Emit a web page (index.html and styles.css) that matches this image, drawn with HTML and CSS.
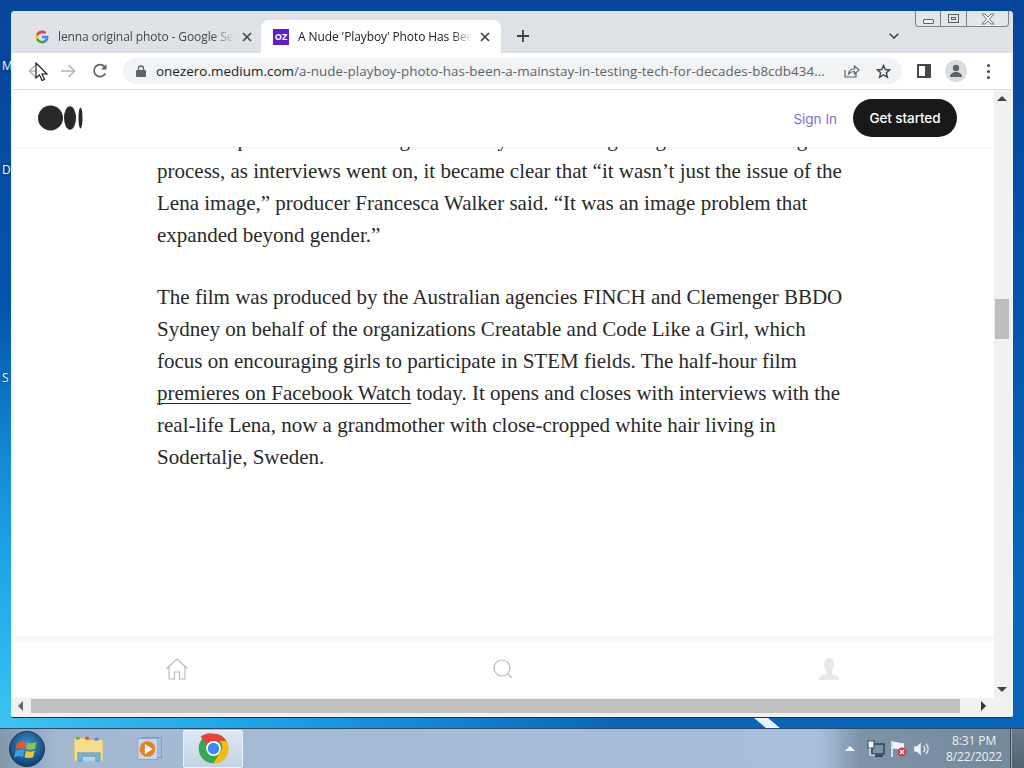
FILE: index.html
```html
<!DOCTYPE html>
<html lang="en">
<head>
<meta charset="utf-8">
<title>A Nude 'Playboy' Photo Has Been a Mainstay</title>
<link rel="stylesheet" href="styles.css">
</head>
<body>
<div class="screen">
  <main class="desktop">
    <span class="desk-label label-m">M</span>
    <span class="desk-label label-d">D</span>
    <span class="desk-label label-s">S</span>
    <span class="streak"></span>
    <section class="window">
      <div class="window-controls">
        <span class="wc wc-min"><i class="min-glyph"></i></span>
        <span class="wc wc-max"><i class="max-glyph"></i></span>
        <span class="wc wc-close"><svg width="16" height="12" viewBox="0 0 16 12"><path d="M2 1h3l3 3 3-3h3l-4.500 5 4.500 5h-3l-3-3-3 3h-3l4.500-5z" fill="#eef0f3" stroke="#6f7780" stroke-width="1"/></svg></span>
      </div>
      <div class="tabstrip">
        <div class="tab">
          <svg class="favicon" width="14" height="14" viewBox="0 0 48 48"><path fill="#4285f4" d="M46 24.500c0-1.600-.1-3.100-.4-4.500H24v8.600h12.400c-.5 2.800-2.100 5.200-4.500 6.800v5.600h7.200C43.400 37 46 31.300 46 24.500z"/><path fill="#34a853" d="M24 46c6 0 11.100-2 14.800-5.400l-7.200-5.600c-2 1.400-4.600 2.200-7.600 2.200-5.800 0-10.700-3.900-12.500-9.200H4.100v5.800C7.800 41.100 15.300 46 24 46z"/><path fill="#fbbc05" d="M11.500 28c-.9-2.600-.9-5.400 0-8v-5.800H4.100a22 22 0 0 0 0 19.600z"/><path fill="#ea4335" d="M24 10.800c3.300 0 6.200 1.100 8.500 3.300l6.400-6.400C35.100 4.100 30 2 24 2 15.300 2 7.800 6.900 4.100 14.200l7.400 5.800c1.800-5.300 6.700-9.200 12.500-9.200z"/></svg>
          <span class="tab-title">lenna original photo - Google Se</span>
          <svg class="tab-x" width="10" height="10" viewBox="0 0 10 10"><path d="M1 1l8 8M9 1L1 9" stroke="#45494e" stroke-width="1.700"/></svg>
        </div>
        <div class="tab tab-active">
          <span class="oz">OZ</span>
          <span class="tab-title">A Nude 'Playboy' Photo Has Bee</span>
          <svg class="tab-x" width="10" height="10" viewBox="0 0 10 10"><path d="M1 1l8 8M9 1L1 9" stroke="#3c4043" stroke-width="1.700"/></svg>
        </div>
        <svg class="newtab" width="12" height="12" viewBox="0 0 12 12"><path d="M6 0v12M0 6h12" stroke="#3c4043" stroke-width="1.800"/></svg>
        <svg class="tabs-menu" width="10" height="6" viewBox="0 0 10 6"><path d="M.7.7L5 5l4.300-4.300" fill="none" stroke="#3c4043" stroke-width="1.500"/></svg>
      </div>
      <div class="toolbar">
        <svg class="tool tool-back" width="16" height="14" viewBox="0 0 16 14"><path d="M15 7H2M7.500 1L1.500 7l6 6" fill="none" stroke="#b4b7bb" stroke-width="1.700"/></svg>
        <svg class="tool tool-fwd" width="16" height="14" viewBox="0 0 16 14"><path d="M1 7h13M8.500 1l6 6-6 6" fill="none" stroke="#b4b7bb" stroke-width="1.700"/></svg>
        <svg class="tool tool-reload" width="16" height="16" viewBox="0 0 16 16"><path d="M13.300 10.500A6 6 0 1 1 12.500 3.600" fill="none" stroke="#5f6368" stroke-width="1.700"/><path d="M14.500 1v5.500H9z" fill="#5f6368"/></svg>
        <div class="omnibox">
          <svg class="lock" width="10" height="12" viewBox="0 0 10 12"><path d="M2.500 5V3.500a2.500 2.500 0 0 1 5 0V5" fill="none" stroke="#5f6368" stroke-width="1.300"/><rect y="5" width="10" height="7" rx="1" fill="#5f6368"/></svg>
          <span class="url"><b>onezero.medium.com</b>/a-nude-playboy-photo-has-been-a-mainstay-in-testing-tech-for-decades-b8cdb434...</span>
          <svg class="share" width="16" height="14" viewBox="0 0 16 14"><path d="M1 6v7h11V9" fill="none" stroke="#5f6368" stroke-width="1.200"/><path d="M4.500 10c.5-3.500 3-5 6-5V2l4.500 4-4.500 4V7.500c-2.500 0-4.500.7-6 2.500z" fill="none" stroke="#5f6368" stroke-width="1.200"/></svg>
          <svg class="star" width="15" height="15" viewBox="0 0 15 15"><path d="M7.500 1.500l1.800 4 4.400.4-3.300 2.900 1 4.300-3.900-2.300-3.900 2.300 1-4.300L1.300 5.900l4.400-.4z" fill="none" stroke="#45494e" stroke-width="1.500"/></svg>
        </div>
        <svg class="tool-panel" width="14" height="14" viewBox="0 0 14 14"><rect x="1" y="1" width="12" height="12" fill="none" stroke="#45494e" stroke-width="2"/><rect x="8" y="1" width="5" height="12" fill="#45494e"/></svg>
        <span class="avatar"><svg width="14" height="14" viewBox="0 0 14 14"><circle cx="7" cy="4" r="3.200" fill="#5f6368"/><path d="M1 13c0-3.500 3-5 6-5s6 1.500 6 5z" fill="#5f6368"/></svg></span>
        <span class="kebab"><i></i><i></i><i></i></span>
      </div>
      <div class="page">
        <div class="viewport">
          <div class="content">
            <header class="site-header">
              <svg class="m-logo" width="45" height="26" viewBox="0 0 45 26"><circle cx="12.500" cy="13" r="12.500" fill="#292929"/><ellipse cx="32" cy="13" rx="6" ry="11.700" fill="#292929"/><ellipse cx="42.500" cy="13" rx="2" ry="10.500" fill="#292929"/></svg>
              <a class="signin">Sign In</a>
              <a class="get-started">Get started</a>
            </header>
            <article class="article">
              <p class="clipped">Once the production team began the story and then it got big and all the thing</p>
              <p class="para">process, as interviews went on, it became clear that “it wasn’t just the issue of the<br>Lena image,” producer Francesca Walker said. “It was an image problem that<br>expanded beyond gender.”</p>
              <p class="para">The film was produced by the Australian agencies FINCH and Clemenger BBDO<br>Sydney on behalf of the organizations Creatable and Code Like a Girl, which<br>focus on encouraging girls to participate in STEM fields. The half-hour film<br><a class="link">premieres on Facebook Watch</a> today. It opens and closes with interviews with the<br>real-life Lena, now a grandmother with close-cropped white hair living in<br>Sodertalje, Sweden.</p>
            </article>
            <nav class="bottom-nav">
              <svg width="24" height="22" viewBox="0 0 24 22"><path d="M1.500 10.500L12 1l10.500 9.500M4 8.500V21h5.500v-7h5v7H20V8.500" fill="none" stroke="#b9b9b9" stroke-width="1.100"/></svg>
              <svg width="22" height="22" viewBox="0 0 22 22"><circle cx="10" cy="10" r="8" fill="none" stroke="#b9b9b9" stroke-width="1.200"/><path d="M16 16l4 4" stroke="#b9b9b9" stroke-width="1.200"/></svg>
              <svg width="22" height="24" viewBox="0 0 22 24"><ellipse cx="11" cy="8" rx="5" ry="7" fill="#e8e8e8"/><path d="M1 23c0-4 4-6 10-6s10 2 10 6z" fill="#e8e8e8"/><rect x="8" y="13" width="6" height="6" fill="#e8e8e8"/></svg>
            </nav>
          </div>
          <div class="vscroll">
            <i class="arrow-up"></i>
            <span class="vthumb"></span>
            <i class="arrow-down"></i>
          </div>
        </div>
        <div class="hscroll">
          <i class="arrow-left"></i>
          <span class="hthumb"></span>
          <i class="arrow-right"></i>
        </div>
      </div>
    </section>
    <svg class="cursor" width="14" height="20" viewBox="0 0 14 20"><path d="M1 1v15l3.500-3.200L7 18.500l2.500-1-2.500-5.500h5z" fill="#fff" stroke="#111" stroke-width="1.100"/></svg>
  </main>
  <footer class="taskbar">
    <svg class="orb" width="38" height="38" viewBox="0 0 38 38">
      <defs><radialGradient id="orbg" cx="50%" cy="40%" r="60%"><stop offset="0" stop-color="#3f9ad6"/><stop offset="1" stop-color="#0c3f6f"/></radialGradient></defs>
      <circle cx="19" cy="19" r="17.500" fill="url(#orbg)" stroke="#1b3a55"/>
      <path d="M9 13c3-2 6-2 9-1l-1.500 7c-3-1-6-1-9 .5z" fill="#e8562a"/>
      <path d="M19.500 12.500c3 1 6 1 9-.5l-1.500 7c-3 1-6 1-9-.5z" fill="#8fc243"/>
      <path d="M7.500 21c3-1.500 6-1.500 8.700-.5L15 27c-3-1-6-1-9 .5z" fill="#3aa0e0"/>
      <path d="M18 21c3 1 6 1 8.700-.5l-1.400 6.500c-3 1.300-6 1.300-8.800.3z" fill="#f4c232"/>
    </svg>
    <svg class="task-icon folder" width="32" height="28" viewBox="0 0 34 30">
      <path d="M1 3h12l2 2h17v23H1z" fill="#f5dd8c" stroke="#c9b26a" stroke-width=".8"/>
      <rect x="3" y="2" width="4" height="3" fill="#67b34a"/><rect x="13" y="2" width="4" height="3" fill="#d8513a"/><rect x="23" y="3" width="4" height="3" fill="#4a8fd0"/>
      <path d="M5 19h24v9h-5v-5H10v5H5z" fill="#6eb3dc" stroke="#4b8fc0" stroke-width=".6"/>
      <rect x="11" y="24" width="12" height="4" fill="#a9d4ee"/>
    </svg>
    <svg class="task-icon media" width="26" height="26" viewBox="0 0 30 28">
      <rect x="6" y="1" width="22" height="23" fill="#9fc2e0" stroke="#6f95b8"/>
      <rect x="1" y="2" width="23" height="24" fill="#c5d8ea" stroke="#7fa3c4"/>
      <circle cx="12" cy="14" r="9" fill="#e8801f"/>
      <path d="M9 8l9 6-9 6z" fill="#fff"/>
    </svg>
    <div class="task-active">
      <svg width="31" height="31" viewBox="0 0 48 48">
        <circle cx="24" cy="24" r="23" fill="#34a853"/>
        <path d="M24 1a23 23 0 0 1 20 11.500H24a11.500 11.500 0 0 0-10 5.800L4 5.900A23 23 0 0 1 24 1z" fill="#ea4335"/>
        <path d="M44 12.500A23 23 0 0 1 24 47l10-17.300a11.500 11.500 0 0 0 0-17.200z" fill="#fbbc05"/>
        <circle cx="24" cy="24" r="11.500" fill="#fff"/>
        <circle cx="24" cy="24" r="9" fill="#4285f4"/>
      </svg>
    </div>
    <div class="tray">
      <i class="tray-arrow"></i>
      <svg width="18" height="18" viewBox="0 0 18 18"><rect x="5" y="4" width="12" height="10" fill="none" stroke="#20303f" stroke-width="1.200"/><rect x="1" y="1" width="6" height="7" fill="#f2f5f8" stroke="#20303f" stroke-width=".8"/><path d="M8 16h8" stroke="#20303f" stroke-width="1.500"/><path d="M3 8v7h5" fill="none" stroke="#f2f5f8" stroke-width="1.200"/></svg>
      <svg width="18" height="18" viewBox="0 0 18 18"><path d="M2 1v16" stroke="#f2f5f8" stroke-width="1.500"/><path d="M3 2c4-1 6 2 11 1v7c-4 1-7-2-11-1z" fill="#f2f5f8"/><circle cx="12" cy="12" r="4.500" fill="#d23b46"/><path d="M10 10l4 4M14 10l-4 4" stroke="#fff" stroke-width="1.200"/></svg>
      <svg width="18" height="18" viewBox="0 0 18 18"><path d="M1 6h3l4-4v14l-4-4H1z" fill="#eef2f6" stroke="#7e8fa0" stroke-width=".5"/><path d="M10.500 6a4 4 0 0 1 0 6M13 4a7 7 0 0 1 0 10" fill="none" stroke="#eef2f6" stroke-width="1.200"/></svg>
    </div>
    <div class="clock"><span>8:31 PM</span><span>8/22/2022</span></div>
    <div class="show-desktop"></div>
  </footer>
</div>
</body>
</html>
```
FILE: styles.css
```css
* { box-sizing: border-box; }
html, body { margin: 0; padding: 0; }
body { width: 1024px; height: 768px; overflow: hidden; font-family: "Open Sans", "Liberation Sans", sans-serif; }
i { display: block; }
p { margin: 0; }

.screen { width: 1024px; height: 768px; display: flex; flex-direction: column; }
.desktop {
  position: relative; height: 728px; overflow: hidden;
  background:
    radial-gradient(ellipse 620px 420px at 0 100%, #3cc4f2 0%, #1aa0e4 45%, rgba(10,110,200,0) 100%),
    linear-gradient(180deg, #07459a 0%, #0455ad 45%, #0866bd 80%, #0a64b8 100%);
}
.desk-label { position: absolute; left: 2px; color: #fff; font-size: 12px; line-height: 14px; text-shadow: 0 0 3px #001a44; }
.label-m { top: 59px; }
.label-d { top: 163px; }
.label-s { top: 371px; }
.streak { position: absolute; left: 760px; top: 718px; width: 14px; height: 10px; background: #e8f6fd; transform: skewX(50deg); }

.window {
  position: absolute; left: 11px; top: 11px; width: 1002px; height: 707px;
  display: flex; flex-direction: column; background: #f1f2f4; border-radius: 4px 4px 2px 2px;
  border-bottom: 1px solid #0b3a68;
}
.window-controls {
  position: absolute; right: 4px; top: 0; height: 16px; display: flex;
  border: 1px solid #7b818a; border-top: 0; border-radius: 0 0 4px 4px; background: #e4e7ea;
}
.wc { display: flex; align-items: center; justify-content: center; height: 15px; border-right: 1px solid #7b818a; }
.wc-min { width: 25px; }
.wc-max { width: 26px; }
.wc-close { width: 41px; border-right: 0; }
.min-glyph { width: 11px; height: 5px; border: 1px solid #5a6068; border-radius: 1px; margin-top: 5px; background: #eef0f3; }
.max-glyph { width: 11px; height: 9px; border: 1px solid #5a6068; box-shadow: inset 0 0 0 2px #e4e7ea, inset 0 0 0 3px #5a6068; }

.tabstrip { height: 42px; background: #dee1e6; display: flex; align-items: flex-end; padding-left: 13px; border-radius: 4px 4px 0 0; }
.tab { width: 237px; height: 33px; display: flex; align-items: center; padding: 0 9px 0 11px; font-size: 12px; color: #45494e; }
.tab-active { width: 240px; background: #fff; border-radius: 8px 8px 0 0; color: #202124; padding-left: 12px; }
.tab-active .tab-x { margin-right: 2px; }
.favicon { flex: none; }
.tab-title {
  flex: 1; margin-left: 9px; white-space: nowrap; overflow: hidden; min-width: 0; letter-spacing: -.1px;
  -webkit-mask-image: linear-gradient(90deg, #000 88%, transparent 100%);
  mask-image: linear-gradient(90deg, #000 88%, transparent 100%);
}
.tab-x { flex: none; margin-left: 8px; }
.oz { flex: none; width: 16px; height: 16px; background: #5b1fd1; color: #fff; font-size: 9px; font-weight: 700; line-height: 16px; text-align: center; }
.newtab { margin: 0 0 11px 16px; }
.tabs-menu { margin: 0 0 14px 360px; }

.toolbar { height: 37px; margin: 0 2px; background: #fff; border-bottom: 1px solid #dadce0; display: flex; align-items: center; position: relative; }
.tool-back { margin-left: 15px; }
.tool-fwd { margin-left: 16px; }
.tool-reload { margin-left: 16px; }
.omnibox { margin-left: 15px; width: 779px; height: 26px; border-radius: 13px; background: #f1f3f4; display: flex; align-items: center; padding-left: 13px; }
.lock { flex: none; }
.url { margin-left: 10px; width: 671px; font-size: 13.4px; color: #5f6368; white-space: nowrap; overflow: hidden; letter-spacing: .05px; }
.url b { font-weight: 400; color: #202124; }
.share { flex: none; margin-left: 17px; }
.star { flex: none; margin-left: 16px; }
.tool-panel { margin-left: 15px; }
.avatar { margin-left: 14px; width: 22px; height: 22px; border-radius: 50%; background: #dadce0; display: flex; align-items: center; justify-content: center; }
.kebab { margin-left: 20px; display: flex; flex-direction: column; gap: 3px; }
.kebab i { width: 3px; height: 3px; border-radius: 50%; background: #45494e; }

.page { flex: 1; min-height: 0; margin: 0 2px; display: flex; flex-direction: column; background: #f1f1f1; }
.viewport { flex: 1; min-height: 0; display: flex; }
.content { flex: 1; min-width: 0; position: relative; display: flex; flex-direction: column; background: #fff; overflow: hidden; }
.site-header {
  position: absolute; left: 0; top: 0; right: 0; height: 57px; background: #fff; z-index: 2;
  display: flex; align-items: center; padding: 0 37px 1px 25px;
  box-shadow: 0 1px 3px rgba(0,0,0,.06);
}
.m-logo { flex: none; margin-right: auto; }
.signin { color: #7a6fd8; font-family: "Inter", sans-serif; font-size: 13.500px; margin: 2px 16px 0 0; }
.get-started { width: 104px; height: 38px; border-radius: 19px; background: #191919; color: #fff; font-family: "Inter", sans-serif; font-size: 13.500px; font-weight: 500; line-height: 38px; text-align: center; letter-spacing: -.1px; }

.article { flex: 1; min-height: 0; padding: 33px 0 0 144px; font-family: "Liberation Serif", serif; font-size: 21px; line-height: 32px; color: #292929; overflow: hidden; }
.clipped { white-space: nowrap; }
.para { margin-bottom: 30px; white-space: nowrap; }
.link { text-decoration: underline; text-underline-offset: 3px; text-decoration-thickness: 1px; }

.bottom-nav {
  height: 62px; flex: none; background: #fff; display: grid; grid-template-columns: 327px 326px 1fr;
  padding: 0 0 3px 152px; align-items: center; border-top: 6px solid #f8f8f8;
}

.vscroll { width: 17px; flex: none; position: relative; background: #f1f1f1; }
.vthumb { position: absolute; left: 1px; top: 209px; width: 14px; height: 40px; background: #bdbdbd; }
.arrow-up { position: absolute; left: 3px; top: 6px; border: 5px solid transparent; border-top: 0; border-bottom-color: #444; }
.arrow-down { position: absolute; left: 3px; bottom: 6px; border: 5px solid transparent; border-bottom: 0; border-top-color: #444; }

.hscroll { height: 16px; margin-bottom: 3px; display: flex; align-items: center; background: #f1f1f1; flex: none; }
.hthumb { margin-left: 8px; width: 929px; height: 14px; background: #c1c0c0; }
.arrow-left { margin-left: 5px; border: 5px solid transparent; border-left: 0; border-right-color: #666; }
.arrow-right { margin-left: 21px; border: 5px solid transparent; border-right: 0; border-left-color: #333; }

.cursor { position: absolute; left: 35px; top: 62px; z-index: 5; }

.taskbar {
  height: 40px; flex: none; position: relative; display: flex; align-items: center;
  background: linear-gradient(90deg, #8497ab 0, #a3b9d2 60px, #a7bfdc 820px, #7f93a8 860px, #75899c 1010px);
  border-top: 1px solid #2a4a68;
}
.orb { flex: none; margin-left: 8px; }
.task-icon { flex: none; }
.folder { margin-left: 27px; }
.media { margin-left: 32px; }
.task-active { flex: none; margin-left: 20px; width: 60px; height: 38px; display: flex; align-items: center; justify-content: center; background: linear-gradient(180deg, #dfe8f2, #c2d3e5); border: 1px solid #f0f4f8; border-radius: 2px; }
.tray { margin-left: auto; display: flex; align-items: center; gap: 5px; }
.tray-arrow { margin-right: 7px; border: 5px solid transparent; border-top: 0; border-bottom-color: #f4f7fa; }
.clock { width: 72px; flex: none; display: flex; flex-direction: column; align-items: center; color: #eaf0f6; font-size: 12px; line-height: 16px; letter-spacing: -.1px; margin-left: 7px; }
.show-desktop { width: 14px; height: 39px; background: linear-gradient(180deg, #6a7c8c, #52636f); border-left: 1px solid #3f4d58; box-shadow: inset 1px 0 0 #9aa9b6; }
```
